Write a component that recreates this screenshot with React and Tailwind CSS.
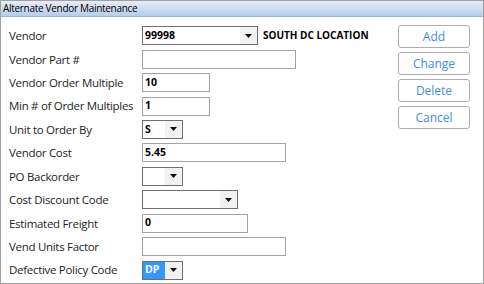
import React from "react";

const font = { fontFamily: '"Open Sans", "Noto Sans", sans-serif' };

function Arrow({ bg = "bg-[#f2f2f2]" }) {
  return (
    <div className={`w-[17px] h-full flex items-center justify-center ${bg}`}>
      <svg width="7" height="4" viewBox="0 0 7 4">
        <path d="M0 0 L7 0 L3.5 4 Z" fill="#111" />
      </svg>
    </div>
  );
}

function Select({ w, value, selected }) {
  return (
    <div className={`${w} h-[19px] border border-[#6e6e6e] bg-white flex items-stretch`}>
      <div className={`flex-1 flex items-center pl-[2px] text-[10.5px] font-bold ${selected ? "bg-[#3399ff] text-white" : "text-black"}`}>
        {value}
      </div>
      <Arrow />
    </div>
  );
}

function Input({ w, value }) {
  return (
    <div className={`${w} h-[19px] border border-[#a3a3a3] bg-white flex items-center pl-[2px] text-[10.5px] font-bold text-black`}>
      {value}
    </div>
  );
}

const rows = [
  ["Vendor", <div className="flex items-center"><Select w="w-[116px]" value="99998" /><span className="ml-[5px] text-[10px] font-bold text-black whitespace-nowrap">SOUTH DC LOCATION</span></div>],
  ["Vendor Part #", <Input w="w-[154px]" value="" />],
  ["Vendor Order Multiple", <Input w="w-[68px]" value="10" />],
  ["Min # of Order Multiples", <Input w="w-[68px]" value="1" />],
  ["Unit to Order By", <Select w="w-[41px]" value="S" />],
  ["Vendor Cost", <Input w="w-[144px]" value="5.45" />],
  ["PO Backorder", <Select w="w-[41px]" value="" />],
  ["Cost Discount Code", <Select w="w-[96px]" value="" />],
  ["Estimated Freight", <Input w="w-[106px]" value="0" />],
  ["Vend Units Factor", <Input w="w-[144px]" value="" />],
  ["Defective Policy Code", <Select w="w-[41px]" value="DP" selected />],
];

export default function App() {
  return (
    <div className="w-[484px] h-[284px] bg-white border border-[#a0a0a0] flex flex-col" style={font}>
      <div className="h-[16px] bg-gradient-to-b from-[#e6eef8] to-[#b7cce6] border-b border-[#9db4d0] flex items-center pl-[2px] text-[10px] tracking-[-0.3px] text-black shrink-0 whitespace-nowrap">
        Alternate Vendor Maintenance
      </div>
      <div className="flex flex-1">
        <div className="flex flex-col pt-[7px] pl-[8px]">
          {rows.map(([label, ctrl], i) => (
            <div key={i} className="h-[23.45px] flex items-center">
              <div className="w-[133px] text-[11.5px] tracking-[-0.3px] text-[#1e1e1e] whitespace-nowrap">{label}</div>
              {ctrl}
            </div>
          ))}
        </div>
        <div className="ml-auto mr-[13px] mt-[8px] flex flex-col gap-[4px]">
          {["Add", "Change", "Delete", "Cancel"].map((b) => (
            <div key={b} className="w-[72px] h-[23px] border border-[#adadad] rounded-[3px] bg-white flex items-center justify-center text-[12px] text-[#3c8fe6]">
              {b}
            </div>
          ))}
        </div>
      </div>
    </div>
  );
}
